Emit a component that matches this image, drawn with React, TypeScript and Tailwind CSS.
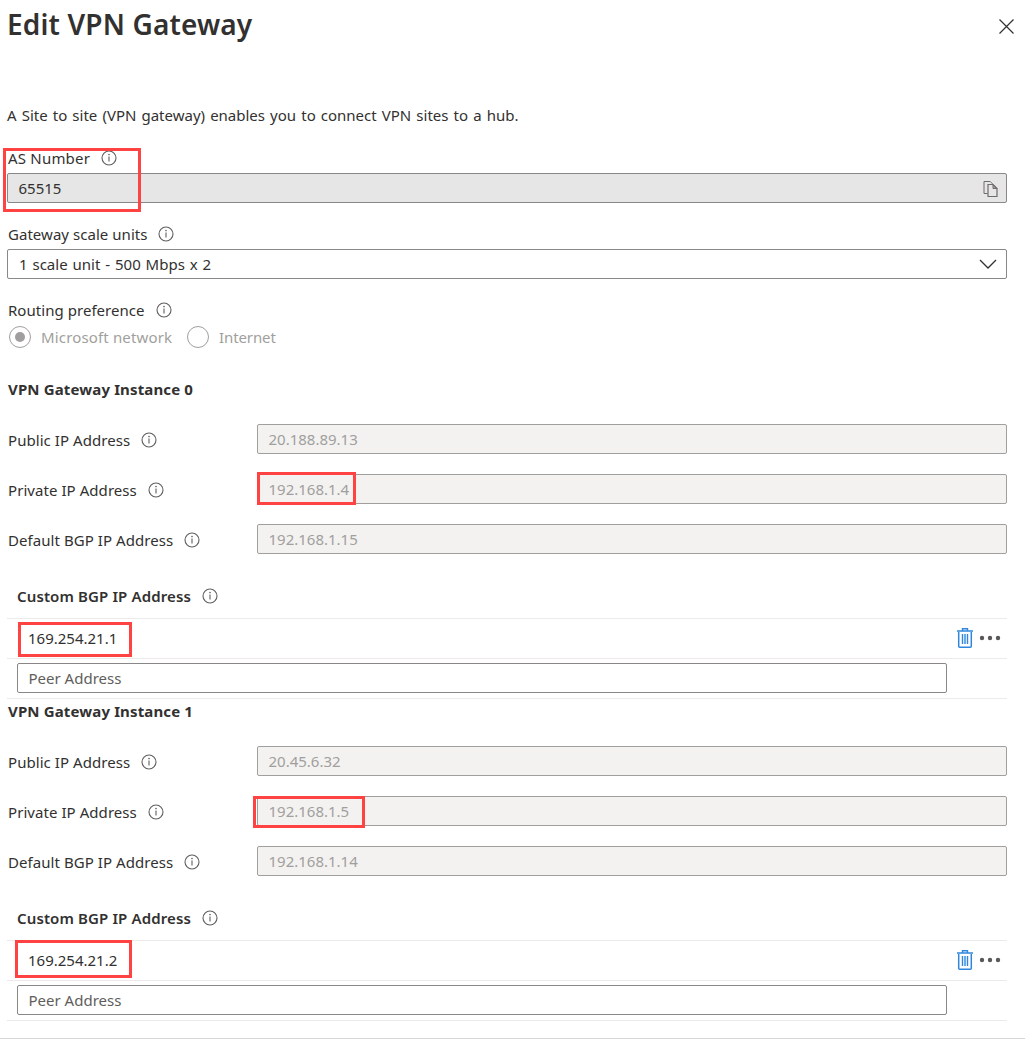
import type { ReactNode } from 'react';

function InfoIcon() {
  return (
    <svg width="16" height="16" viewBox="0 0 16 16" fill="none" className="shrink-0">
      <circle cx="8" cy="8" r="7" stroke="#605e5c" strokeWidth="1.1" />
      <path d="M8 6.5v5" stroke="#605e5c" strokeWidth="1.1" />
      <circle cx="8" cy="4.6" r="0.8" fill="#605e5c" />
    </svg>
  );
}

function CopyIcon() {
  return (
    <svg width="15" height="16" viewBox="0 0 15 16" fill="none" stroke="#6f6d6b" className="mt-[2px] shrink-0">
      <path d="M4.500 12.500h-3.500v-12h6.200l2.500 2.500" />
      <path d="M5 3.500h5l4 4v8H5z" strokeWidth="1.200" />
      <path d="M10 3.500v4h4z" fill="#6f6d6b" fillOpacity="0.45" />
    </svg>
  );
}

function TrashIcon() {
  return (
    <svg width="16" height="20" viewBox="0 0 16 20" fill="none" stroke="#2f86dc" className="shrink-0">
      <path d="M0 3h16" strokeWidth="1.500" />
      <path d="M5.500 3V.8h5V3" strokeWidth="1.400" />
      <path d="M1.700 4v14.200a1 1 0 0 0 1 1h10.600a1 1 0 0 0 1-1V4" strokeWidth="1.500" />
      <path d="M5.500 6v10M8 6v10M10.500 6v10" strokeWidth="1.400" />
    </svg>
  );
}

function Label({ children, className = 'pl-px' }: { children: ReactNode; className?: string }) {
  return (
    <div className={`flex items-center gap-[11px] whitespace-nowrap ${className}`}>
      <span>{children}</span>
      <InfoIcon />
    </div>
  );
}

function Highlight({ className }: { className: string }) {
  return <div className={`pointer-events-none absolute border-3 border-[#ff4343] ${className}`} />;
}

function ReadOnlyRow({ label, value, mark }: { label: string; value: string; mark?: string }) {
  return (
    <div className="flex h-[30px] items-center">
      <Label className="w-[250px] pl-px pt-px tracking-[0.06px]">{label}</Label>
      <div className="relative flex-1">
        <div className="flex h-[30px] items-center rounded-xs border border-[#a19f9d] bg-[#f3f2f1] px-[10.5px] text-[#a19f9d]">
          {value}
        </div>
        {mark && <Highlight className={mark} />}
      </div>
    </div>
  );
}

interface Instance {
  title: string;
  publicIp: string;
  privateIp: string;
  defaultBgp: string;
  customBgp: string;
  spacing: string;
  privateMark: string;
  customMark: string;
}

const instances: Instance[] = [
  {
    title: 'VPN Gateway Instance 0',
    publicIp: '20.188.89.13',
    privateIp: '192.168.1.4',
    defaultBgp: '192.168.1.15',
    customBgp: '169.254.21.1',
    spacing: 'mt-7',
    privateMark: 'left-0 -top-[2px] h-[33px] w-[99px]',
    customMark: 'left-[11px] top-[3px] h-[35px] w-[114px]',
  },
  {
    title: 'VPN Gateway Instance 1',
    publicIp: '20.45.6.32',
    privateIp: '192.168.1.5',
    defaultBgp: '192.168.1.14',
    customBgp: '169.254.21.2',
    spacing: 'mt-0',
    privateMark: '-left-1 top-0 h-8 w-[112px]',
    customMark: 'left-2 -top-px h-[38px] w-[117px]',
  },
];

function GatewayInstance({ data }: { data: Instance }) {
  return (
    <section className={data.spacing}>
      <h2 className="h-6 pl-px font-bold leading-6 tracking-[0.14px]">{data.title}</h2>
      <div className="mt-[23px] flex flex-col gap-5">
        <ReadOnlyRow label="Public IP Address" value={data.publicIp} />
        <ReadOnlyRow label="Private IP Address" value={data.privateIp} mark={data.privateMark} />
        <ReadOnlyRow label="Default BGP IP Address" value={data.defaultBgp} />
      </div>
      <Label className="mt-[27px] h-[29px] pl-[10px] font-semibold tracking-[0.12px]">Custom BGP IP Address</Label>
      <div className="mt-2 border-y border-[#edebe9]">
        <div className="relative flex h-[39px] items-center pb-[2px] pl-[21px] pr-[6px]">
          <span className="flex-1">{data.customBgp}</span>
          <TrashIcon />
          <svg width="22" height="6" viewBox="0 0 22 6" fill="#5a5856" className="ml-[6px]">
            <circle cx="3" cy="3" r="2.200" />
            <circle cx="11" cy="3" r="2.200" />
            <circle cx="19" cy="3" r="2.200" />
          </svg>
          <Highlight className={data.customMark} />
        </div>
        <div className="h-10 border-t border-[#edebe9] pl-[10px] pt-1">
          <input
            placeholder="Peer Address"
            className="block h-[30px] w-[930px] rounded-xs border border-[#8a8886] px-[10.5px] outline-none placeholder:text-[#605e5c]"
          />
        </div>
      </div>
    </section>
  );
}

export default function App() {
  return (
    <div className="h-[1049px] w-[1025px] overflow-hidden bg-white font-['Noto_Sans',sans-serif] text-[15px] leading-5 text-[#323130]">
      <div className="pl-[7px] pr-[18px]">
        <header className="-mr-[7px] flex h-[52px] items-center justify-between">
          <h1 className="pb-[5px] text-[28px] font-semibold leading-9 tracking-[0.15px]">Edit VPN Gateway</h1>
          <svg width="15" height="15" viewBox="0 0 15 15" stroke="#323130" strokeWidth="1.200">
            <path d="M.5.5l14 14M14.500.5l-14 14" />
          </svg>
        </header>
        <p className="mt-[51px] h-6 whitespace-nowrap leading-6 [word-spacing:1.2px]">
          A Site to site (VPN gateway) enables you to connect VPN sites to a hub.
        </p>

        <div className="relative mt-[17px]">
          <Label className="h-[29px] pb-px pl-px tracking-[0.2px]">AS Number</Label>
          <div className="flex h-[30px] items-center justify-between rounded-xs border border-[#8a8886] bg-[#e6e6e6] pl-[10.5px] pr-[8px]">
            <span>65515</span>
            <CopyIcon />
          </div>
          <Highlight className="-left-1 top-1 h-16 w-[138px]" />
        </div>

        <div className="mt-[17px]">
          <Label className="h-[29px] pb-px pl-px tracking-[0.04px]">Gateway scale units</Label>
          <div className="flex h-[30px] items-center justify-between rounded-xs border border-[#8a8886] pl-[11px] pr-[9px]">
            <span className="[word-spacing:1px]">1 scale unit - 500 Mbps x 2</span>
            <svg width="18" height="10" viewBox="0 0 18 10" fill="none" stroke="#323130" strokeWidth="1.300">
              <path d="M1 1l8 8 8-8" />
            </svg>
          </div>
        </div>

        <div className="mt-[17px]">
          <Label className="h-[29px] pb-px pl-px tracking-[0.04px]">Routing preference</Label>
          <div className="flex h-6 items-center pl-[2px] text-[#a19f9d]">
            <span className="flex size-[22px] items-center justify-center rounded-full border border-[#a19f9d]">
              <span className="size-[10px] rounded-full bg-[#a19f9d]" />
            </span>
            <span className="ml-[10px] w-[146px] tracking-[0.15px]">Microsoft network</span>
            <span className="size-[22px] rounded-full border border-[#a19f9d]" />
            <span className="ml-[10px] tracking-[-0.1px]">Internet</span>
          </div>
        </div>

        {instances.map((instance) => (
          <GatewayInstance key={instance.title} data={instance} />
        ))}
      </div>
      <div className="mt-[17px] border-t border-[#d6d6d6]" />
    </div>
  );
}
